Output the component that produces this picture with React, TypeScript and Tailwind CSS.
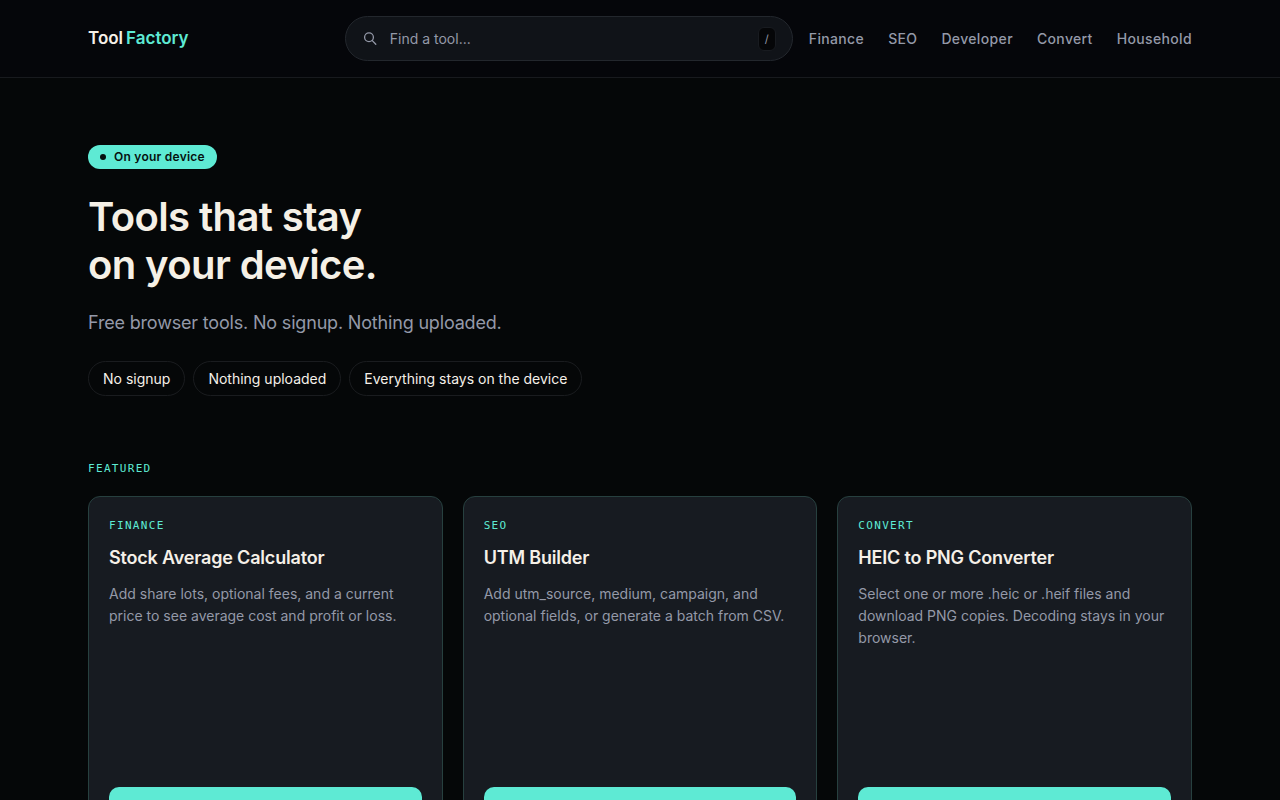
import { useState } from 'react';

const categories = ['Finance', 'SEO', 'Developer', 'Convert', 'Household'];

const promises = ['No signup', 'Nothing uploaded', 'Everything stays on the device'];

const featured = [
  {
    category: 'Finance',
    title: 'Stock Average Calculator',
    text: 'Add share lots, optional fees, and a current price to see average cost and profit or loss.',
  },
  {
    category: 'SEO',
    title: 'UTM Builder',
    text: 'Add utm_source, medium, campaign, and optional fields, or generate a batch from CSV.',
  },
  {
    category: 'Convert',
    title: 'HEIC to PNG Converter',
    text: 'Select one or more .heic or .heif files and download PNG copies. Decoding stays in your browser.',
  },
];

function Header() {
  const [query, setQuery] = useState('');

  return (
    <header className="border-b border-[#181a1e] bg-[#05060a]">
      <div className="mx-auto flex max-w-6xl items-center gap-4 px-6 py-4">
        <a href="#" className="flex gap-[3px] text-[17px] font-semibold leading-[27px] text-[#f5f0e8]">
          <span>Tool</span>
          <span className="text-[#5eead4]">Factory</span>
        </a>
        <label className="ml-auto flex h-[45px] w-full max-w-md items-center gap-3 rounded-full border border-[#23272d] bg-[#101318] px-4">
          <svg viewBox="0 0 16 16" className="h-4 w-4 shrink-0 text-[#9499a8]" fill="none" stroke="currentColor" strokeWidth="1.3" strokeLinecap="round">
            <circle cx="7" cy="6.3" r="4.4" />
            <path d="M10.3 9.6 13.8 13.2" />
          </svg>
          <input
            type="search"
            aria-label="Find a tool"
            placeholder="Find a tool..."
            value={query}
            onChange={e => setQuery(e.target.value)}
            className="min-w-0 flex-1 bg-transparent text-sm leading-[21px] text-[#f5f0e8] outline-none placeholder:text-[#9499a8]"
          />
          <kbd className="rounded-md border border-[#181b20] bg-[#050608] px-[6px] py-[3px] font-['Inter',sans-serif] text-[11px] leading-4 text-[#9499a8]">/</kbd>
        </label>
        <nav className="flex gap-6 text-sm font-medium leading-[21px] tracking-wide text-[#9499a8]">
          {categories.map(name => (
            <a key={name} href={`#${name.toLowerCase()}`}>{name}</a>
          ))}
        </nav>
      </div>
    </header>
  );
}

function Eyebrow({ children }: { children: string }) {
  return (
    <p className="font-['DejaVu_Sans_Mono',monospace] text-[11px] uppercase leading-[18px] tracking-[0.12em] text-[#5eead4]">
      {children}
    </p>
  );
}

function Hero() {
  return (
    <section className="flex flex-col items-start">
      <span className="flex items-center gap-2 rounded-full bg-[#5eead4] px-3 py-1 text-xs font-semibold tracking-[0.02em] text-[#06110f]">
        <span className="h-[6px] w-[6px] rounded-full bg-[#06110f]" />
        On your device
      </span>
      <h1 className="mt-6 text-[40px] font-semibold leading-[48px] tracking-[-0.015em] text-[#f5f0e6]">
        Tools that stay
        <br />
        on your device.
      </h1>
      <p className="mt-5 text-lg leading-7 tracking-[-0.01em] text-[#9499a8]">Free browser tools. No signup. Nothing uploaded.</p>
      <ul className="mt-6 flex flex-wrap gap-2">
        {promises.map(text => (
          <li key={text} className="rounded-full border border-[#1a1c1f] px-[14px] py-[6px] text-sm leading-[21px] text-[#f5f0e8]">
            {text}
          </li>
        ))}
      </ul>
    </section>
  );
}

export default function App() {
  return (
    <div className="min-h-screen bg-[#050708] font-['Inter',sans-serif]">
      <Header />
      <main className="mx-auto max-w-6xl px-6 pb-16 pt-[67px]">
        <Hero />
        <section className="mt-16">
          <Eyebrow>Featured</Eyebrow>
          <div className="mt-[18px] grid grid-cols-3 gap-5">
            {featured.map(tool => (
              <article key={tool.title} className="flex min-h-[364px] flex-col rounded-xl border border-[#27403f] bg-[#171b21] p-5">
                <Eyebrow>{tool.category}</Eyebrow>
                <h2 className="mt-[9px] text-lg font-semibold leading-7 tracking-[-0.01em] text-[#f5f0e8]">{tool.title}</h2>
                <p className="mt-[11px] text-sm leading-[22px] text-[#9499a8]">{tool.text}</p>
                <button type="button" className="mt-auto h-[52px] w-full rounded-[10px] bg-[#5eead4] text-sm font-semibold text-[#06110f]">
                  Open tool
                </button>
              </article>
            ))}
          </div>
        </section>
      </main>
    </div>
  );
}
